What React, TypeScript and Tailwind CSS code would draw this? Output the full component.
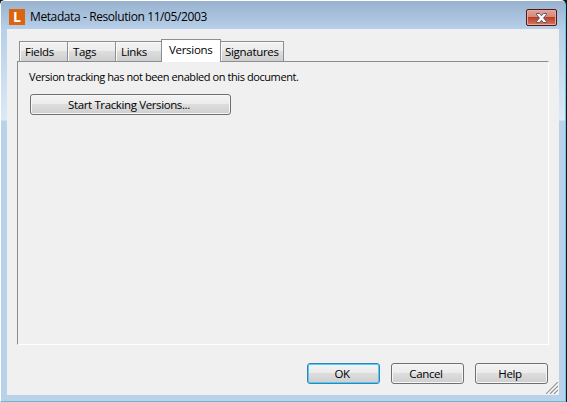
import React from 'react';
import clsx from 'clsx';

const tabs = [
  { label: 'Fields', width: 'w-[48px]' },
  { label: 'Tags', width: 'w-[48px]' },
  { label: 'Links', width: 'w-[46px]' },
  { label: 'Versions', width: 'w-[60px]' },
  { label: 'Signatures', width: 'w-[63px]' },
];

type ButtonProps = {
  children: React.ReactNode;
  className?: string;
  primary?: boolean;
};

const DialogButton = ({ children, className, primary }: ButtonProps) => (
  <button
    className={clsx(
      'flex h-[21px] items-center justify-center rounded-[3px] border bg-[linear-gradient(#f3f3f3,#ebebeb_50%,#dddddd_50%,#cfcfcf)] pr-[3px] leading-none tracking-[-0.38px] whitespace-nowrap',
      primary
        ? 'border-[#3c7fb1] shadow-[inset_0_0_0_1px_#48d0f8]'
        : 'border-[#707070] shadow-[inset_0_0_0_1px_#f6f6f6]',
      className
    )}
  >
    {children}
  </button>
);

const CloseButton = () => (
  <button
    aria-label="Close"
    className="mt-[8px] mr-[2px] flex h-[17px] w-[31px] items-center justify-center rounded-[2px] border border-[#4d1a1e] bg-[linear-gradient(#e3a295,#d68676_50%,#bb3e28_50%,#d27a60)] shadow-[inset_0_0_0_1px_#e8aa9c]"
  >
    <svg width="13" height="10" viewBox="0 0 13 10">
      <path d="M1.5.5h3l2 2.2 2-2.2h3v1L8.6 5l2.9 3.5v1h-3l-2-2.2-2 2.2h-3v-1L4.4 5 1.5 1.5z" fill="#f8f8f8" stroke="#535666" />
    </svg>
  </button>
);

const App = () => (
  <div className="h-[402px] w-[567px] overflow-hidden bg-[#101820] font-['Open_Sans','Noto_Sans',sans-serif] text-[11.5px] text-black">
    {/* Window frame */}
    <div className="relative flex h-[402px] w-[566px] flex-col rounded-t-[5px] border border-t-white border-r-[#62cce4] border-b-[#60bcd0] border-l-white bg-[linear-gradient(#b7cfe8_28px,#dce9f6_119px,#bad1ea_120px)]">
      {/* Title bar */}
      <div className="flex h-[28px] shrink-0 items-start rounded-t-[4px] bg-linear-to-b from-[#98b2cf] to-[#b7cfe8] pr-[6px] pl-[8px]">
        <div className="mt-[8px] flex h-[16px] w-[16px] items-center justify-center bg-[#dc640f] text-[14px] leading-none font-bold text-white">
          L
        </div>
        <span className="mt-[8px] ml-[5px] text-[12px] leading-[16px] tracking-[-0.4px]">
          Metadata - Resolution 11/05/2003
        </span>
        <div className="ml-auto">
          <CloseButton />
        </div>
      </div>

      {/* Client area */}
      <div className="mx-[6px] flex h-[366px] flex-col bg-[#f0f0f0] px-[10px] pt-[10px]">
        <div className="z-10 -mb-px flex h-[23px] items-end pl-[2px]">
          {tabs.map(({ label, width }) => {
            const active = label === 'Versions';
            return (
              <div
                key={label}
                className={clsx(
                  'flex shrink-0 border-t border-[#8c8e94] leading-[16px] tracking-[-0.3px] whitespace-nowrap',
                  width,
                  active
                    ? 'h-[23px] border-x bg-white pt-[2px] pl-[7px]'
                    : 'h-[21px] border-b bg-[linear-gradient(#f3f3f3,#ebebeb_50%,#dddddd_50%,#cfcfcf)] pt-[2px] shadow-[inset_1px_1px_0_#fafafa]',
                  !active && (label === 'Signatures' ? 'border-r pl-[4px]' : 'border-l pl-[5px]')
                )}
              >
                {label}
              </div>
            );
          })}
        </div>

        <div className="h-[284px] w-[532px] border border-t-[#8c8c8c] border-r-white border-b-white border-l-[#8c8c8c] pt-[7px] pl-[11px]">
          <p className="text-[11px] leading-[16px] tracking-[-0.42px] whitespace-nowrap">
            Version tracking has not been enabled on this document.
          </p>
          <DialogButton className="mt-[9px] ml-px w-[201px]">Start Tracking Versions...</DialogButton>
        </div>

        <div className="mt-[18px] flex justify-end gap-[11px] pr-px">
          <DialogButton primary className="w-[73px]">OK</DialogButton>
          <DialogButton className="w-[73px]">Cancel</DialogButton>
          <DialogButton className="w-[73px]">Help</DialogButton>
        </div>
      </div>

      {/* Resize grip */}
      <svg className="absolute right-[7px] bottom-[7px]" width="12" height="12" viewBox="0 0 12 12">
        <path d="M1 12 12 1M5 12l7-7M9 12l3-3" stroke="#fff" strokeWidth="2" />
        <path d="M0 12 12 0M4 12l8-8M8 12l4-4" stroke="#929292" strokeWidth="1.2" />
      </svg>
    </div>
  </div>
);

export default App;
